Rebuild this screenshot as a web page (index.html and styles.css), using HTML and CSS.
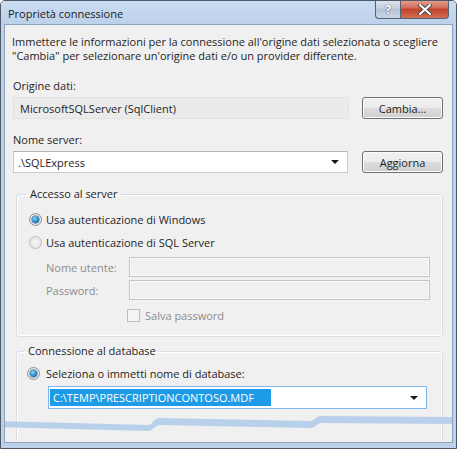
FILE: index.html
```html
<!DOCTYPE html>
<html lang="it">
<head>
  <meta charset="UTF-8">
  <title>Proprietà connessione</title>
  <link rel="stylesheet" href="styles.css">
</head>
<body>

  <div class="window">
    <div class="titlebar">
      <span class="title">Proprietà connessione</span>
      <div class="caption">
        <button class="cap help">?</button>
        <button class="cap close">
          <svg width="14" height="11" viewBox="0 0 14 11">
            <path d="M2 1 L12 10 M12 1 L2 10" stroke="#4a4a4a" stroke-width="4" stroke-linecap="round"/>
            <path d="M2 1 L12 10 M12 1 L2 10" stroke="#fff" stroke-width="2" stroke-linecap="round"/>
          </svg>
        </button>
      </div>
    </div>

    <div class="client">
      <div class="content">
        <p class="intro">Immettere le informazioni per la connessione all'origine dati selezionata o scegliere "Cambia" per selezionare un'origine dati e/o un provider differente.</p>

        <div class="label first">Origine dati:</div>
        <div class="row">
          <div class="readonly">MicrosoftSQLServer (SqlClient)</div>
          <button class="btn">Cambia...</button>
        </div>

        <div class="label">Nome server:</div>
        <div class="row">
          <div class="combo server">
            <span>.\SQLExpress</span>
            <span class="arrow"></span>
          </div>
          <button class="btn">Aggiorna</button>
        </div>

        <fieldset class="group access">
          <legend>Accesso al server</legend>
          <div class="option">
            <span class="radio checked"></span>
            <span>Usa autenticazione di Windows</span>
          </div>
          <div class="option">
            <span class="radio disabled"></span>
            <span>Usa autenticazione di SQL Server</span>
          </div>
          <div class="cred">
            <span class="dim">Nome utente:</span>
            <div class="input-off"></div>
          </div>
          <div class="cred">
            <span class="dim">Password:</span>
            <div class="input-off"></div>
          </div>
          <div class="save">
            <span class="check"></span>
            <span class="dim">Salva password</span>
          </div>
        </fieldset>

        <fieldset class="group database">
          <legend>Connessione al database</legend>
          <div class="option">
            <span class="radio checked"></span>
            <span>Seleziona o immetti nome di database:</span>
          </div>
          <div class="combo focused">
            <span class="selected">C:\TEMP\PRESCRIPTIONCONTOSO.MDF</span>
            <span class="arrow"></span>
          </div>
        </fieldset>
      </div>

      <!-- bordo strappato dello screenshot -->
      <svg class="torn" width="447" height="30" viewBox="5 414 447 30">
        <path d="M0 423 L148 427 C153 427 153 420 160 420 L310 423 C315 423 315 418 322 418 L457 419 L457 426 L322 425 C317 425 316 430 310 430 L160 427 C155 427 153 433 148 433 L0 429 Z" fill="#b9d0ea"/>
      </svg>
    </div>
  </div>

</body>
</html>
```
FILE: styles.css
```css
* {
  box-sizing: border-box;
}
body {
  margin: 0;
  font-family: "Open Sans", sans-serif;
  font-size: 11px;
  color: #1e1e1e;
  background: #fff;
}
.window {
  width: 457px;
  height: 449px;
  border: 1px solid #505a66;
  border-radius: 5px 5px 0 0;
  background: #bcd1ea;
  display: flex;
  flex-direction: column;
  overflow: hidden;
}
.titlebar {
  height: 23px;
  display: flex;
  align-items: flex-start;
  justify-content: space-between;
  padding-left: 7px;
  background: linear-gradient(#cadcf1, #bcd1ea);
}
.title {
  font-size: 11px;
  line-height: 26px;
  color: #1b1b1b;
}
.caption {
  display: flex;
  margin-right: 7px;
  margin-top: -1px;
}
.cap {
  height: 19px;
  border: 1px solid #56616f;
  border-top: none;
  padding: 0;
  font-family: "Open Sans", sans-serif;
  display: flex;
  align-items: center;
  justify-content: center;
}
.help {
  width: 25px;
  border-radius: 0 0 0 4px;
  border-right: none;
  background: linear-gradient(#dfe7f2, #c3d0e0 45%, #b2c2d6 50%, #c9d6e6);
  color: #fff;
  font-size: 13px;
  font-weight: bold;
  text-shadow: 0 0 1px #3d4b5c, 0 0 1px #3d4b5c;
}
.close {
  width: 49px;
  border-radius: 0 0 4px 0;
  background: linear-gradient(#e8a493, #d06b58 45%, #c2412c 50%, #d36c53);
}
.client {
  flex: 1;
  margin: 0 3px 5px;
  border: 1px solid #8da2bc;
  background: #f0f0f0;
  position: relative;
  overflow: hidden;
}
.content {
  height: 417px;
  overflow: hidden;
  padding: 10px 9px 0 8px;
}
.intro {
  margin: 0 0 0 -1px;
  line-height: 14px;
}
.label {
  line-height: 16px;
  margin-top: 13px;
  margin-bottom: 3px;
}
.label.first {
  margin-top: 15px;
}
.row {
  display: flex;
  justify-content: space-between;
}
.readonly, .combo {
  width: 336px;
  height: 22px;
  display: flex;
  align-items: center;
  justify-content: space-between;
  padding: 0 8px 0 5px;
}
.readonly {
  background: #ebebeb;
  border: 1px solid #e2e2e2;
  padding-left: 6px;
}
.combo {
  background: #fff;
  border: 1px solid #c9c9c9;
  border-top-color: #b5b5b5;
}
.combo.server {
  width: 335px;
  padding-left: 4px;
}
.arrow {
  width: 0;
  height: 0;
  border-left: 4px solid transparent;
  border-right: 4px solid transparent;
  border-top: 4px solid #1a1a1a;
}
.btn {
  width: 81px;
  height: 22px;
  font-family: "Open Sans", sans-serif;
  font-size: 11px;
  color: #1e1e1e;
  border: 1px solid #707070;
  border-radius: 3px;
  background: linear-gradient(#f2f2f2, #ebebeb 50%, #dddddd 51%, #cfcfcf);
  box-shadow: inset 0 0 0 1px #fcfcfc;
  padding: 0;
}
.group {
  border: 1px solid #d5dfe5;
  border-radius: 3px;
  box-shadow: inset 0 0 0 1px #fff;
  margin: 13px 0 0 3px;
  padding: 9px 12px 13px 12px;
}
.group legend {
  padding: 0 4px;
  margin-left: -3px;
  line-height: 16px;
}
.option {
  display: flex;
  align-items: center;
  gap: 4px;
  height: 16px;
  margin-bottom: 7px;
}
.radio {
  width: 13px;
  height: 13px;
  border-radius: 50%;
  border: 1px solid #8e8f8f;
  background: radial-gradient(circle, #ffffff, #dcdcdc);
  position: relative;
}
.radio.checked::after {
  content: "";
  position: absolute;
  left: 2px;
  top: 2px;
  width: 7px;
  height: 7px;
  border-radius: 50%;
  background: radial-gradient(circle at 40% 35%, #8ad3f7, #2a87c8 55%, #0c4c80);
  box-shadow: 0 0 0 0.5px #1f5b8a;
}
.radio.disabled {
  border-color: #bcbcbc;
  background: radial-gradient(circle, #f6f6f6, #e0e0e0);
}
.dim {
  color: #8d8d8d;
}
.cred {
  display: flex;
  align-items: center;
  justify-content: space-between;
  padding-left: 17px;
  margin-bottom: 3px;
}
.input-off {
  width: 301px;
  height: 20px;
  border: 1px solid #c5c5c5;
  box-shadow: inset 0 0 0 1px #f8f8f8;
  background: #f0f0f0;
}
.save {
  display: flex;
  align-items: center;
  gap: 5px;
  margin-left: 98px;
  margin-top: 8px;
}
.check {
  width: 13px;
  height: 13px;
  border: 1px solid #bdbdbd;
  background: #f4f4f4;
}
.database {
  margin-top: 6px;
  padding-top: 6px;
  padding-left: 10px;
  padding-bottom: 60px;
}
.database .option {
  gap: 6px;
  margin-bottom: 5px;
}
.combo.focused {
  width: 379px;
  margin-left: 21px;
  height: 23px;
  border-color: #7eb4ea;
  padding: 0 8px 0 1px;
}
.selected {
  background: #1e9be6;
  color: #fff;
  width: 221px;
  height: 17px;
  line-height: 17px;
  padding-left: 3px;
}
.torn {
  position: absolute;
  left: 0;
  bottom: 0;
}
```
